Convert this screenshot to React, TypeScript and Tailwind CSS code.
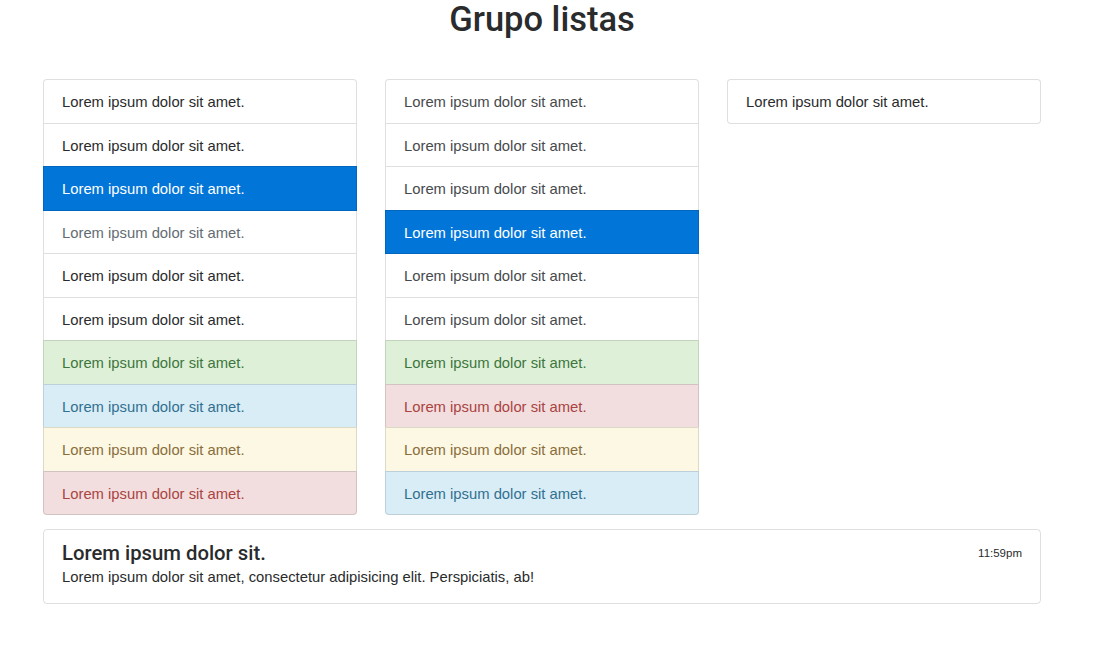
const FONT = { fontFamily: '"Liberation Sans", Arial, sans-serif' };
const HEAD = { fontFamily: 'Roboto, "Liberation Sans", Arial, sans-serif' };

type Item = { text: string; tone: string };

const base = 'Lorem ipsum dolor sit amet.';

const tones: Record<string, string> = {
  normal: 'bg-white text-[#292b2c]',
  action: 'bg-white text-[#464a4c]',
  disabled: 'bg-white text-[#636c72]',
  active: 'bg-[#0275d8] text-white border-[#0275d8] relative z-10',
  success: 'bg-[#dff0d8] text-[#3c763d]',
  info: 'bg-[#d9edf7] text-[#31708f]',
  warning: 'bg-[#fcf8e3] text-[#8a6d3b]',
  danger: 'bg-[#f2dede] text-[#a94442]',
};

const listOne: Item[] = [
  { text: base, tone: 'normal' },
  { text: base, tone: 'normal' },
  { text: base, tone: 'active' },
  { text: base, tone: 'disabled' },
  { text: base, tone: 'normal' },
  { text: base, tone: 'normal' },
  { text: base, tone: 'success' },
  { text: base, tone: 'info' },
  { text: base, tone: 'warning' },
  { text: base, tone: 'danger' },
];

const listTwo: Item[] = [
  { text: base, tone: 'action' },
  { text: base, tone: 'action' },
  { text: base, tone: 'action' },
  { text: base, tone: 'active' },
  { text: base, tone: 'action' },
  { text: base, tone: 'action' },
  { text: base, tone: 'success' },
  { text: base, tone: 'danger' },
  { text: base, tone: 'warning' },
  { text: base, tone: 'info' },
];

const listThree: Item[] = [{ text: base, tone: 'normal' }];

function ListGroup({ items }: { items: Item[] }) {
  return (
    <ul className="flex flex-col">
      {items.map((item, i) => (
        <li
          key={i}
          className={
            'flex h-[44.5px] items-center border border-black/[0.125] px-[18px] pt-[2px] text-[14.8px] -mb-px first:rounded-t-[4px] last:rounded-b-[4px] last:mb-0 ' +
            tones[item.tone]
          }
        >
          {item.text}
        </li>
      ))}
    </ul>
  );
}

export default function App() {
  return (
    <div className="min-h-screen bg-white" style={FONT}>
      <div className="ml-[43px] w-[998px]">
        {/* Title */}
        <h1
          className="text-center text-[34.5px] font-medium leading-[39px] text-[#292b2c]"
          style={HEAD}
        >
          Grupo listas
        </h1>

        {/* Lists */}
        <div className="mt-[40px] grid grid-cols-3 items-start gap-[28px]">
          <ListGroup items={listOne} />
          <ListGroup items={listTwo} />
          <ListGroup items={listThree} />
        </div>

        {/* Card item */}
        <div className="mt-[14px] rounded-[4px] border border-black/[0.125] px-[18px] pt-[11px] pb-[15px] text-[#292b2c]">
          <div className="flex items-start justify-between">
            <h5
              className="text-[20.3px] font-medium leading-[24px] text-[#292b2c]"
              style={HEAD}
            >
              Lorem ipsum dolor sit.
            </h5>
            <small className="mt-[5px] text-[11.5px] leading-[14px]">11:59pm</small>
          </div>
          <p className="mt-[2px] text-[14.8px] leading-[21px]">
            Lorem ipsum dolor sit amet, consectetur adipisicing elit. Perspiciatis, ab!
          </p>
        </div>
      </div>
    </div>
  );
}
